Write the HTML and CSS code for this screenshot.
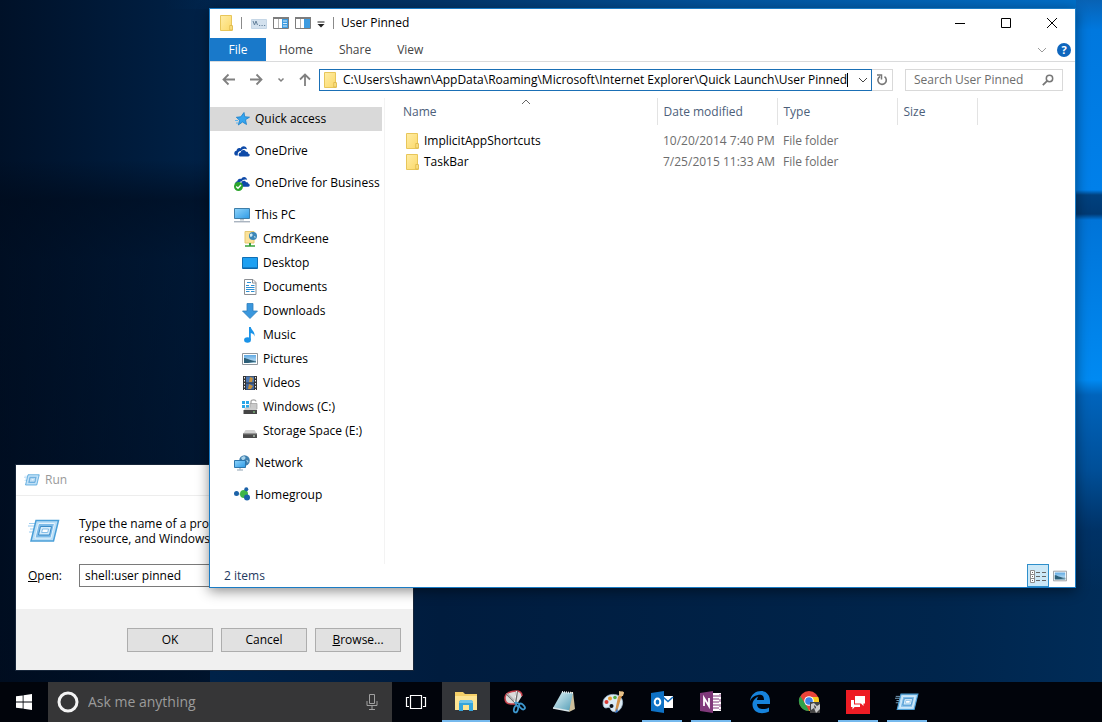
FILE: index.html
```html
<!DOCTYPE html>
<html lang="en">

<head>
    <meta charset="UTF-8">
    <meta name="viewport" content="width=device-width, initial-scale=1.0">
    <title>User Pinned</title>

    <link rel="stylesheet" href="styles.css">
</head>

<body>
    <!-- Shared icons -->
    <svg class="sprite" aria-hidden="true">
        <defs>
            <linearGradient id="g-folder" x1="0" y1="0" x2="1" y2="1">
                <stop offset="0" stop-color="#ffeda6"/>
                <stop offset="1" stop-color="#fbd867"/>
            </linearGradient>
            <linearGradient id="g-screen" x1="0" y1="0" x2="1" y2="1">
                <stop offset="0" stop-color="#8fd4fb"/>
                <stop offset="1" stop-color="#2f9be6"/>
            </linearGradient>
            <linearGradient id="g-sky" x1="0" y1="0" x2="0" y2="1">
                <stop offset="0" stop-color="#5fa9e3"/>
                <stop offset="1" stop-color="#d4ecfa"/>
            </linearGradient>
            <linearGradient id="g-note" x1="0" y1="0" x2="1" y2="1">
                <stop offset="0" stop-color="#e4f5f8"/>
                <stop offset="1" stop-color="#4f9bb5"/>
            </linearGradient>
            <symbol id="folder" viewBox="0 0 16 16">
                <path d="M2.500 .5h11v10.500h.8v4.500H2.500z" fill="url(#g-folder)" stroke="#e8c65a"/>
                <path d="M11.800 15V10.500h2.500V15z" fill="#fde48a" stroke="#dcb443" stroke-width=".8"/>
            </symbol>
            <symbol id="run" viewBox="0 0 32 24">
                <path d="M1 4.500h8M0 7h7M2 10h6M1 13h5" stroke="#9ccdf0" stroke-width="1"/>
                <path d="M8 1.500h22.500L25.500 22H3z" fill="#b9def7" stroke="#4a9fd8" stroke-width="1.500"/>
                <path d="M10.500 4.500h16L23 19H7z" fill="#7dbbe8" stroke="#e6f4fd" stroke-width="1"/>
                <path d="M12.500 7.500h11l-2 8.500h-11z" fill="#d5ecfb" stroke="#3b8cc8" stroke-width="1"/>
                <path d="M14.500 10h6l-.8 3.500h-6z" fill="#fff" stroke="#6cb0e2" stroke-width=".8"/>
            </symbol>
            <symbol id="cloud" viewBox="0 0 16 16">
                <path d="M1.500 12.500C-.5 11.500 0 8 2.500 7.800 2.600 5.300 5 4.300 6.600 5.400 8 2.200 12.300 2.500 13 6.300c-2.800-1.300-5.200 0-5.900 1.700C4.500 7.800 3.300 10 3.900 12.500z" fill="#0e4aa8"/>
                <path d="M6 13.500c-2-.3-1.800-4 .7-4C7.300 6.500 11 6.300 12 8.800c1.500-.3 2.300.5 2.200 1.700 2 0 2 3 0 3z" fill="#0e4aa8"/>
            </symbol>
            <symbol id="picture" viewBox="0 0 16 12">
                <path d="M.5.5h15v11H.5z" fill="#fff" stroke="#8f959b"/>
                <path d="M2 2h12v8H2z" fill="url(#g-sky)"/>
                <path d="M2 5c3 0 5 2.500 12 3v2H2z" fill="#2d5f78"/>
                <path d="M6 10l8-1.500V10z" fill="#9dc4d6"/>
            </symbol>
        </defs>
    </svg>

    <main class="desktop">
        <!-- Run dialog -->
        <section class="run" aria-label="Run">
            <header class="run-title">
                <svg class="run-small"><use href="#run"/></svg>
                <span>Run</span>
            </header>
            <div class="run-body">
                <div class="run-row">
                    <svg class="run-big"><use href="#run"/></svg>
                    <p class="run-text">Type the name of a program, folder, document, or Internet<br>resource, and Windows will open it for you.</p>
                </div>
                <div class="run-row">
                    <label class="run-label" for="open"><u>O</u>pen:</label>
                    <input class="run-input" id="open" type="text" value="shell:user pinned">
                </div>
            </div>
            <footer class="run-footer">
                <button class="run-button">OK</button>
                <button class="run-button">Cancel</button>
                <button class="run-button"><u>B</u>rowse...</button>
            </footer>
        </section>

        <!-- File Explorer -->
        <section class="explorer" aria-label="User Pinned">
            <header class="titlebar">
                <svg class="icon16"><use href="#folder"/></svg>
                <span class="divider"></span>
                <div class="quick">
                    <button class="plain" aria-label="Rename">
                        <svg class="icon16" viewBox="0 0 16 16">
                            <path d="M.5 4.500h15v9H.5z" fill="#d3e1ee" stroke="#c5d6e6"/>
                            <path d="M2 6l1.500 4L5 6l1.500 4" fill="none" stroke="#66829c"/>
                            <path d="M8 10.500h1.200M10.500 10.500h1.200M13 10.500h1.200" stroke="#66829c"/>
                        </svg>
                    </button>
                    <button class="plain" aria-label="Details pane">
                        <svg class="icon16" viewBox="0 0 16 16">
                            <path d="M.5 2.500h15v11H.5z" fill="#fff" stroke="#7d7d7d"/>
                            <path d="M0 3h16" stroke="#7d7d7d" stroke-width="2"/>
                            <path d="M5.500 4v9" stroke="#b5b5b5"/>
                            <path d="M9 4h6v9H9z" fill="#3d9be0"/>
                            <path d="M10 6h4M10 8.500h4M10 11h4" stroke="#d7edfb"/>
                        </svg>
                    </button>
                    <button class="plain" aria-label="Preview pane">
                        <svg class="icon16" viewBox="0 0 16 16">
                            <path d="M.5 2.500h15v11H.5z" fill="#fff" stroke="#7d7d7d"/>
                            <path d="M0 3h16" stroke="#7d7d7d" stroke-width="2"/>
                            <path d="M5.500 4v9" stroke="#b5b5b5"/>
                            <path d="M9 4h6v9H9z" fill="#3d9be0"/>
                        </svg>
                    </button>
                    <button class="plain" aria-label="Customize toolbar">
                        <svg class="icon8" viewBox="0 0 8 16">
                            <path d="M.5 7h7" stroke="#222"/>
                            <path d="M.5 9h7L4 12.500z" fill="#222"/>
                        </svg>
                    </button>
                </div>
                <span class="divider"></span>
                <h1 class="title">User Pinned</h1>
                <div class="controls">
                    <button class="control" aria-label="Minimize">
                        <svg class="icon10" viewBox="0 0 10 10"><path d="M0 5.500h10" stroke="#000"/></svg>
                    </button>
                    <button class="control" aria-label="Maximize">
                        <svg class="icon10" viewBox="0 0 10 10"><path d="M.5.5h9v9h-9z" fill="none" stroke="#000"/></svg>
                    </button>
                    <button class="control" aria-label="Close">
                        <svg class="icon10" viewBox="0 0 10 10"><path d="M0 0l10 10M10 0L0 10" stroke="#000"/></svg>
                    </button>
                </div>
            </header>

            <nav class="tabs">
                <button class="tab tab-file">File</button>
                <button class="tab">Home</button>
                <button class="tab">Share</button>
                <button class="tab">View</button>
                <div class="tabs-end">
                    <button class="plain" aria-label="Expand the ribbon">
                        <svg class="icon10" viewBox="0 0 10 10"><path d="M1 3l4 4 4-4" fill="none" stroke="#9a9a9a"/></svg>
                    </button>
                    <button class="help" aria-label="Help">?</button>
                </div>
            </nav>

            <div class="toolbar">
                <div class="arrows">
                    <button class="plain" aria-label="Back">
                        <svg class="icon14" viewBox="0 0 14 14"><path d="M13 6.500H1.500M6.500 1.500l-5 5 5 5" fill="none" stroke="#808080" stroke-width="1.800"/></svg>
                    </button>
                    <button class="plain" aria-label="Forward">
                        <svg class="icon14" viewBox="0 0 14 14"><path d="M1 6.500h11.500M7.500 1.500l5 5-5 5" fill="none" stroke="#808080" stroke-width="1.800"/></svg>
                    </button>
                    <button class="plain" aria-label="Recent locations">
                        <svg class="icon8" viewBox="0 0 8 8"><path d="M1.500 2.500L4 5l2.500-2.500" fill="none" stroke="#808080" stroke-width="1.500"/></svg>
                    </button>
                    <button class="plain" aria-label="Up">
                        <svg class="icon14" viewBox="0 0 14 14"><path d="M7 13V1.500M2 6.500l5-5 5 5" fill="none" stroke="#808080" stroke-width="1.800"/></svg>
                    </button>
                </div>
                <div class="address">
                    <svg class="icon16"><use href="#folder"/></svg>
                    <input class="address-input" type="text" aria-label="Address" value="C:\Users\shawn\AppData\Roaming\Microsoft\Internet Explorer\Quick Launch\User Pinned">
                    <span class="caret"></span>
                    <button class="plain address-drop" aria-label="Previous locations">
                        <svg class="icon10" viewBox="0 0 10 10"><path d="M1 3l4 4 4-4" fill="none" stroke="#444"/></svg>
                    </button>
                </div>
                <button class="refresh" aria-label="Refresh">
                    <svg class="icon12" viewBox="0 0 12 12">
                        <path d="M4 2.500A4.200 4.200 0 1 0 8.500 2.700" fill="none" stroke="#777" stroke-width="1.600"/>
                        <path d="M1 1h4.500v4.500" fill="none" stroke="#777" stroke-width="1.500"/>
                    </svg>
                </button>
                <div class="search">
                    <input class="search-input" type="text" aria-label="Search" placeholder="Search User Pinned">
                    <svg class="icon12" viewBox="0 0 12 12">
                        <circle cx="7.500" cy="4.500" r="3.200" fill="none" stroke="#777" stroke-width="1.500"/>
                        <path d="M5.200 6.800L.8 11.200" stroke="#777" stroke-width="1.800"/>
                    </svg>
                </div>
            </div>

            <div class="content">
                <nav class="sidebar">
                    <ul class="group">
                        <li><a class="item active" href="#">
                            <svg class="icon16" viewBox="0 0 16 16"><path d="M10 1.500l.7 4.200 4.800.5-4 2.500 1 4.800-4-2.500L4.300 14l1.300-4.700L2.300 6.300l4.500-.5z" fill="#35a4ee" stroke="#1b7fc9" stroke-width=".8"/><path d="M1 9.500h3M2 12h2" stroke="#5cb4ee"/></svg>
                            Quick access</a></li>
                    </ul>
                    <ul class="group">
                        <li><a class="item" href="#"><svg class="icon16"><use href="#cloud"/></svg>OneDrive</a></li>
                    </ul>
                    <ul class="group">
                        <li><a class="item" href="#">
                            <svg class="icon16" viewBox="0 0 16 16"><use href="#cloud" x="1" y="-1" width="15" height="15"/><circle cx="4.500" cy="11.500" r="4.500" fill="#2da52d"/><path d="M2.200 11.500l1.800 1.800 3-3.300" fill="none" stroke="#fff" stroke-width="1.300"/></svg>
                            OneDrive for Business</a></li>
                    </ul>
                    <ul class="group">
                        <li><a class="item" href="#">
                            <svg class="icon16" viewBox="0 0 16 16"><path d="M.5 1.500h15v10H.5z" fill="url(#g-screen)" stroke="#3f7ea8"/><path d="M6 12h4v1.500H6z" fill="#b8c4cc"/><path d="M0 14.800h16" stroke="#8795a5"/></svg>
                            This PC</a></li>
                        <li><a class="item child" href="#">
                            <svg class="icon16" viewBox="0 0 16 16"><path d="M3 .5h9V12H3z" fill="#fbe29a" stroke="#e5c870"/><circle cx="11" cy="5" r="4" fill="#3c87b8"/><path d="M8 3c2-1.500 3 0 2.500 1.500S8.500 6 8 5.500zM12 5c1.500 0 2 1 1 2.500z" fill="#cfe9f5"/><path d="M7 12h2v3H7z" fill="#39a23a"/><path d="M3 15h10" stroke="#39a23a" stroke-width="1.500"/></svg>
                            CmdrKeene</a></li>
                        <li><a class="item child" href="#">
                            <svg class="icon16" viewBox="0 0 16 16"><path d="M.5 2.500h15v11H.5z" fill="#1da0f2" stroke="#0f6fb5"/><path d="M1 13h14" stroke="#0c5d9c"/></svg>
                            Desktop</a></li>
                        <li><a class="item child" href="#">
                            <svg class="icon16" viewBox="0 0 16 16"><path d="M2.500.5h8.500l3 3v12H2.500z" fill="#fff" stroke="#8b8f94"/><path d="M10.500.5v3.500H14" fill="none" stroke="#8b8f94"/><path d="M5 3.500h4M4 6.500h3M9 6.500h3.500M4 8.500h8.500M4 10.500h8.500M4 12.500h3.500M9 12.500h3.500" stroke="#2d8fd2" stroke-width="1.200"/></svg>
                            Documents</a></li>
                        <li><a class="item child" href="#">
                            <svg class="icon16" viewBox="0 0 16 16"><path d="M5 .5h6V8h4.500L8 15.500.5 8H5z" fill="#3a97dd" stroke="#2f7fbd" stroke-width=".8"/></svg>
                            Downloads</a></li>
                        <li><a class="item child" href="#">
                            <svg class="icon16" viewBox="0 0 16 16"><ellipse cx="5.500" cy="13" rx="3.400" ry="2.700" fill="#1a93e8"/><path d="M7 0h1.800c.2 3 4.500 4.500 3.700 9.500-.5-2.200-1.800-3-3.700-3.500V13H7z" fill="#1a93e8"/></svg>
                            Music</a></li>
                        <li><a class="item child" href="#"><svg class="icon16"><use href="#picture"/></svg>Pictures</a></li>
                        <li><a class="item child" href="#">
                            <svg class="icon16" viewBox="0 0 16 16"><path d="M1 1h14v14H1z" fill="#333"/><path d="M4 1.500h8v6H4z" fill="#4d78b4"/><path d="M4 8.500h8v6H4z" fill="#3f66a0"/><path d="M8 2l3 1-1 4H7zM7 9l4 2-2 3H6z" fill="#c8923a"/><path d="M2.500 2v13M13.500 2v13" stroke="#eee" stroke-dasharray="1.500 1.500"/></svg>
                            Videos</a></li>
                        <li><a class="item child" href="#">
                            <svg class="icon16" viewBox="0 0 16 16"><path d="M0 2h3v3H0zM4 2h3v3H4zM0 6h3v3H0zM4 6h3v3H4z" fill="#2aa6e8"/><path d="M9 5V2.500C9 .3 14 .3 14 2.500" fill="none" stroke="#a5a5a5" stroke-width="1.300"/><path d="M8 4.500h7V10H8z" fill="#c9c9c9" stroke="#9c9c9c" stroke-width=".7"/><path d="M3 8.500h11l1 3H2z" fill="#ccc"/><path d="M1.500 11h13.500v4H1.500z" fill="#454545"/><path d="M11 13h2" stroke="#8fe08f"/></svg>
                            Windows (C:)</a></li>
                        <li><a class="item child" href="#">
                            <svg class="icon16" viewBox="0 0 16 16"><path d="M3.500 7h9l2.500 4H1z" fill="#d2d2d2"/><path d="M1 10.500h14V15H1z" fill="#4a4a4a"/><path d="M1 10.800h14" stroke="#9a9a9a"/><path d="M11 13h2" stroke="#d9eed9"/></svg>
                            Storage Space (E:)</a></li>
                    </ul>
                    <ul class="group">
                        <li><a class="item" href="#">
                            <svg class="icon16" viewBox="0 0 16 16"><circle cx="10.500" cy="5.500" r="5.300" fill="#3f7fae"/><path d="M7 3c2-2.500 4-2 4.500-.5S9 5 9 6zM12 5c2 0 3 1 2 3z" fill="#a9d3ea"/><path d="M.5 5.500h11v7H.5z" fill="url(#g-screen)" stroke="#2d77ad"/><path d="M6 13v1.500M3 15h6" stroke="#8fa3b3"/></svg>
                            Network</a></li>
                    </ul>
                    <ul class="group">
                        <li><a class="item" href="#">
                            <svg class="icon16" viewBox="0 0 16 16"><path d="M3 6.500l7 1.500 2-5M10 8l3 3" stroke="#9fc7a5" fill="none"/><circle cx="10" cy="7" r="4" fill="#3fb549"/><circle cx="2.500" cy="6.500" r="2.500" fill="#1c62a8"/><circle cx="12.300" cy="2.200" r="2" fill="#1c62a8"/><circle cx="13" cy="10.500" r="3" fill="#1c62a8"/></svg>
                            Homegroup</a></li>
                    </ul>
                </nav>

                <div class="files">
                    <table class="list">
                        <thead>
                            <tr>
                                <th class="col-name">Name
                                    <svg class="sort" viewBox="0 0 10 6"><path d="M1 5l4-4 4 4" fill="none" stroke="#666"/></svg>
                                </th>
                                <th class="col-date">Date modified</th>
                                <th class="col-type">Type</th>
                                <th class="col-size">Size</th>
                                <td></td>
                            </tr>
                        </thead>
                        <tbody>
                            <tr class="spacer"><td colspan="5"></td></tr>
                            <tr>
                                <td><span class="file"><svg class="icon16"><use href="#folder"/></svg>ImplicitAppShortcuts</span></td>
                                <td>10/20/2014 7:40 PM</td>
                                <td>File folder</td>
                                <td></td>
                                <td></td>
                            </tr>
                            <tr>
                                <td><span class="file"><svg class="icon16"><use href="#folder"/></svg>TaskBar</span></td>
                                <td>7/25/2015 11:33 AM</td>
                                <td>File folder</td>
                                <td></td>
                                <td></td>
                            </tr>
                        </tbody>
                    </table>
                </div>
            </div>

            <footer class="status">
                <span>2 items</span>
                <div class="views">
                    <button class="view selected" aria-label="Details">
                        <svg class="icon16" viewBox="0 0 16 14"><path d="M.5 1.500h4v12h-4zM.5 5.500h4M.5 9.500h4" fill="#fff" stroke="#8c8c8c"/><path d="M2 3.500h1M2 7.500h1M2 11.500h1M6 3.500h4M6 7.500h4M6 11.500h4M12 3.500h4M12 7.500h4M12 11.500h4" stroke="#666"/></svg>
                    </button>
                    <button class="view" aria-label="Large icons">
                        <svg class="icon14"><use href="#picture"/></svg>
                    </button>
                </div>
            </footer>
        </section>
    </main>

    <!-- Taskbar -->
    <footer class="taskbar">
        <button class="task start" aria-label="Start">
            <svg class="icon16" viewBox="0 0 16 16"><path d="M0 2.300L6.700 1.400V7.600H0zM7.500 1.200L16 0v7.600H7.500zM0 8.400h6.700v6.200L0 13.700zM7.500 8.400H16V16l-8.500-1.200z" fill="#fff"/></svg>
        </button>
        <div class="cortana">
            <svg class="icon22" viewBox="0 0 22 22"><circle cx="11" cy="11" r="9" fill="none" stroke="#f4f4f4" stroke-width="3"/></svg>
            <input class="cortana-input" type="text" aria-label="Cortana" placeholder="Ask me anything">
            <svg class="mic" viewBox="0 0 12 18"><path d="M3.500 1.500h5v9h-5zM1 8v4.500h10V8M6 12.500V16M3 16.500h6" fill="none" stroke="#a0a0a0"/></svg>
        </div>
        <button class="task" aria-label="Task view">
            <svg class="icon22" viewBox="0 0 22 22"><path d="M5.500 4.500h11v13h-11zM4 6.500H1.500v9H4M18 6.500h2.500v9H18" fill="none" stroke="#fff" stroke-width="1.200"/></svg>
        </button>
        <div class="apps">
            <button class="task current" aria-label="File Explorer">
                <svg class="icon24" viewBox="0 0 24 24"><path d="M1 3h8l2 2h12v16H1z" fill="#f4cf68"/><path d="M1 7h22v14H1z" fill="#fde493"/><path d="M5 22v-8c0-2 1-3 3-3h8c2 0 3 1 3 3v8h-4v-6H9v6z" fill="#35a5dc"/><path d="M5 14c0-2 1-3 3-3h8c2 0 3 1 3 3z" fill="#71c5ea"/></svg>
            </button>
            <button class="task" aria-label="Snipping Tool">
                <svg class="icon24" viewBox="0 0 24 24"><path d="M2 8C2 3 8 1 13 1c4 0 6 2 6 5l-5 8H8c-4 0-6-2-6-6z" fill="#dcdcdc"/><path d="M13 14H8c-4 0-6-2-6-6C2 3 8 1 13 1c4 0 6 2 6 5" fill="none" stroke="#c9434e" stroke-width="1.500"/><path d="M4 4l10 10M14 1l-2 13" stroke="#6d6d6d" stroke-width="2.200"/><path d="M4 3.500l9 9M13.500 1l-2 11" stroke="#f5f5f5"/><ellipse cx="13" cy="19" rx="2" ry="3.500" fill="none" stroke="#3d98cf" stroke-width="1.800" transform="rotate(15 13 19)"/><ellipse cx="19" cy="16.500" rx="2" ry="3.500" fill="none" stroke="#3d98cf" stroke-width="1.800" transform="rotate(-45 19 16.500)"/><path d="M12 12l2 4M12 12l5 2" stroke="#3d98cf" stroke-width="1.500"/></svg>
            </button>
            <button class="task" aria-label="Notepad">
                <svg class="icon24" viewBox="0 0 24 24"><path d="M18 2h3l2 17-6 3z" fill="#cdbf9c"/><path d="M10 2l11 1-4 18L1 18z" fill="url(#g-note)"/><path d="M1 18l16 3" stroke="#d9e6ea" stroke-width="1.300"/><path d="M10 2l11 1" stroke="#e6ecee" stroke-width="2" stroke-dasharray="1 1"/></svg>
            </button>
            <button class="task" aria-label="Paint">
                <svg class="icon24" viewBox="0 0 24 24"><path d="M2 13C2 6 10 3 16 5c6 2 7 8 4 13-2 4-8 5-10 2-1-3-2-3-5-2-2 0-3-2-3-5z" fill="#dcebf5" stroke="#9fb9cb" stroke-width=".8"/><circle cx="5.500" cy="12" r="2" fill="#d83a35"/><circle cx="9" cy="8.500" r="2" fill="#e99a2c"/><circle cx="14" cy="7.500" r="1.800" fill="#55ad47"/><circle cx="10.500" cy="16" r="2" fill="#0a1018"/><path d="M21 1l2 2-3 5-4 14-2-1 3-14z" fill="#d4924a"/><path d="M18 1l5 1-1 4-4 0z" fill="#e6c189"/><path d="M16 18l1 4-3 1z" fill="#3976c8"/></svg>
            </button>
            <button class="task running" aria-label="Outlook">
                <svg class="icon24" viewBox="0 0 24 24"><path d="M13 6h10v12H13z" fill="#fff"/><path d="M13 7l5 4.500L23 7" fill="none" stroke="#0f6cbf" stroke-width="1.600"/><path d="M1 3l13-2v22L1 21z" fill="#0e72c6"/><ellipse cx="7.500" cy="12" rx="2.800" ry="3.500" fill="none" stroke="#fff" stroke-width="2"/></svg>
            </button>
            <button class="task running" aria-label="OneNote">
                <svg class="icon24" viewBox="0 0 24 24"><path d="M13 3h9v18h-9z" fill="#fff"/><path d="M14 6h6M14 9h6M14 12h6M14 15h6M14 18h6" stroke="#80397b"/><path d="M21 4v16" stroke="#80397b" stroke-dasharray="3 2"/><path d="M1 3l13-2v22L1 21z" fill="#80397b"/><path d="M5 16V8l5 8V8" fill="none" stroke="#fff" stroke-width="1.800"/></svg>
            </button>
            <button class="task" aria-label="Edge">
                <svg class="icon24" viewBox="0 0 24 24"><path d="M2 11C3 4 8 1 13 1c6 0 9 5 9 10v3H9c0 6 8 6 12 3.500v4C14 25 5 23 4.500 15 4.300 11 7 8 10.500 6.500 9.500 7.500 9 9 9 10h7c0-5-3-5.500-6-5C6 5.500 3.500 8 2 11z" fill="#1683dc"/></svg>
            </button>
            <button class="task" aria-label="Chrome">
                <svg class="icon24" viewBox="0 0 24 24"><circle cx="12" cy="11" r="10" fill="#e9443a"/><path d="M3.300 6L9 15l3 6A10 10 0 0 1 3.300 6z" fill="#30a24c"/><path d="M12 7h9.200A10 10 0 0 1 12 21l5-8z" fill="#fbcd1d"/><circle cx="12" cy="11" r="4.800" fill="#fff"/><circle cx="12" cy="11" r="3.800" fill="#3f83ea"/><path d="M13 12h10v11H13z" fill="#444"/><path d="M14 14l3-1 3 3 3-2v5l-4 4-2-5-3 2z" fill="#c9c9c9"/><path d="M17 15l2 2-1 2z" fill="#222"/></svg>
            </button>
            <button class="task running" aria-label="Chat">
                <svg class="icon24" viewBox="0 0 24 24"><path d="M0 0h24v24H0z" fill="#ed1c24"/><path d="M9 6h10v7.500h-1.500V16L15 13.500H9z" fill="#fff"/><path d="M5 10h3v4.500h6V17H8.500L6.500 19.500V17H5z" fill="#fff"/></svg>
            </button>
            <button class="task running" aria-label="Run">
                <svg class="icon24"><use href="#run"/></svg>
            </button>
        </div>
    </footer>
</body>

</html>
```
FILE: styles.css
```css
* {
    box-sizing: border-box;
}

body {
    margin: 0;
    height: 100vh;
    display: flex;
    flex-direction: column;
    overflow: hidden;
    font-family: "Open Sans", "Noto Sans", sans-serif;
    font-size: 12px;
    line-height: 16px;
    color: #000;
}

button, input {
    font: inherit;
    color: inherit;
    border: none;
    padding: 0;
    margin: 0;
    background: none;
}

input {
    outline: none;
    min-width: 0;
}

svg {
    display: block;
    flex: none;
}

ul {
    list-style: none;
    margin: 0;
    padding: 0;
}

.sprite {
    position: absolute;
    width: 0;
    height: 0;
}

.icon8 { width: 8px; height: 16px; }
.icon10 { width: 10px; height: 10px; }
.icon12 { width: 12px; height: 12px; }
.icon14 { width: 14px; height: 14px; }
.icon16 { width: 16px; height: 16px; }
.icon22 { width: 22px; height: 22px; }
.icon24 { width: 24px; height: 24px; }

.plain {
    display: flex;
    align-items: center;
}

/* Desktop wallpaper */
.desktop {
    flex: 1;
    position: relative;
    background:
        linear-gradient(to bottom, #0862b4 0, #0078de 30px, #0080ea 190px, #00417f 195px, #003a74 214px, #0074d8 220px, #008af2 380px, #0064bc 395px, #004f98 470px, rgba(0, 52, 106, .8) 530px, rgba(0, 42, 86, 0) 590px) right top / 26px 100% no-repeat,
        linear-gradient(to right, rgba(0, 30, 66, 0) 15%, #003468 40%, #00539c 65%, #0070ca 100%) left top / 100% 9px no-repeat,
        linear-gradient(to bottom, rgba(0, 10, 26, 0) 160px, rgba(0, 10, 26, .6) 200px, rgba(0, 10, 26, .4) 260px, rgba(0, 10, 26, .6) 100%) left top / 210px 100% no-repeat,
        linear-gradient(to right, #001128 0, #002248 210px, #001c3e 40%, #00254c 85%, #002c58 100%);
}

/* Run dialog */
.run {
    position: absolute;
    left: 15px;
    bottom: 11px;
    width: 399px;
    background: #fff;
    border: 1px solid #17263a;
}

.run-title {
    display: flex;
    align-items: center;
    gap: 5px;
    height: 31px;
    padding: 0 8px;
    color: #999;
    border-bottom: 1px solid #ededed;
}

.run-small {
    width: 16px;
    height: 12px;
}

.run-big {
    width: 32px;
    height: 24px;
}

.run-body {
    display: grid;
    gap: 18px;
    padding: 20px 12px 22px;
}

.run-row {
    display: grid;
    grid-template-columns: 51px 1fr;
    align-items: center;
}

.run-text {
    margin: 0;
    line-height: 15px;
    white-space: nowrap;
}

.run-input {
    height: 23px;
    padding: 0 5px;
    border: 1px solid #7a7a7a;
}

.run-footer {
    display: flex;
    justify-content: flex-end;
    gap: 8px;
    padding: 19px 12px 18px;
    background: #f0f0f0;
}

.run-button {
    width: 86px;
    height: 24px;
    background: #e1e1e1;
    border: 1px solid #adadad;
}

/* Explorer window */
.explorer {
    position: absolute;
    top: 8px;
    left: 209px;
    right: 26px;
    bottom: 94px;
    display: flex;
    flex-direction: column;
    background: #fff;
    border: 1px solid #1a7bc4;
    box-shadow: 0 3px 12px rgba(0, 0, 0, .45);
}

.titlebar {
    display: flex;
    align-items: center;
    gap: 7px;
    height: 29px;
    padding: 0 0 2px 8px;
}

.divider {
    width: 1px;
    height: 12px;
    background: #8a8a8a;
}

.quick {
    display: flex;
    gap: 6px;
    padding: 0 1px 0 2px;
}

.title {
    margin: 0;
    font-size: 12px;
    font-weight: normal;
}

.controls {
    display: flex;
    margin-left: auto;
}

.control {
    display: flex;
    align-items: center;
    justify-content: center;
    width: 46px;
    height: 26px;
}

.tabs {
    display: flex;
    height: 24px;
    border-bottom: 1px solid #dadbdc;
}

.tab {
    padding: 0 13px;
    color: #444;
}

.tab-file {
    width: 56px;
    color: #fff;
    background: #1979ca;
}

.tabs-end {
    display: flex;
    align-items: center;
    gap: 10px;
    margin-left: auto;
    padding-right: 4px;
}

.help {
    width: 14px;
    height: 14px;
    border-radius: 50%;
    background: #0f66bd;
    color: #fff;
    font-size: 11px;
    font-weight: bold;
    line-height: 14px;
}

.toolbar {
    display: flex;
    align-items: center;
    height: 36px;
    padding: 0 12px;
}

.arrows {
    display: flex;
    align-items: center;
    justify-content: space-between;
    width: 90px;
    margin-right: 7px;
}

.address {
    flex: 1;
    display: flex;
    align-items: center;
    height: 22px;
    padding: 0 3px 0 2px;
    border: 1px solid #1a6fb5;
}

.address-input {
    field-sizing: content;
    padding-left: 5px;
}

.caret {
    width: 1px;
    height: 14px;
    background: #000;
}

.address-drop {
    margin-left: auto;
}

.refresh {
    display: flex;
    align-items: center;
    justify-content: center;
    width: 21px;
    height: 22px;
    border: 1px solid #d9d9d9;
    border-left: none;
}

.search {
    display: flex;
    align-items: center;
    width: 158px;
    height: 22px;
    margin-left: 12px;
    padding: 0 8px;
    border: 1px solid #d9d9d9;
}

.search-input {
    flex: 1;
}

.search-input::placeholder {
    color: #6d6d6d;
}

.content {
    flex: 1;
    display: flex;
    min-height: 0;
}

/* Navigation pane */
.sidebar {
    display: flex;
    flex-direction: column;
    gap: 8px;
    width: 175px;
    padding: 9px 2px 0 0;
    border-right: 1px solid #f3f3f3;
}

.item {
    display: flex;
    align-items: center;
    gap: 5px;
    height: 24px;
    padding-left: 24px;
    color: #000;
    text-decoration: none;
    white-space: nowrap;
}

.child {
    padding-left: 32px;
}

.active {
    background: #d9d9d9;
}

/* File list */
.files {
    flex: 1;
}

.list {
    width: 100%;
    table-layout: fixed;
    border-collapse: collapse;
}

.list th {
    height: 27px;
    padding: 0 6px;
    font-weight: normal;
    text-align: left;
    color: #4c607a;
    border-right: 1px solid #e3e3e3;
}

.list td {
    height: 21px;
    padding: 0 6px;
    color: #6d6d6d;
    white-space: nowrap;
}

.list .col-name {
    position: relative;
    width: 272px;
    padding-left: 18px;
}

.col-date, .col-type {
    width: 120px;
}

.col-size {
    width: 80px;
}

.list .spacer td {
    height: 5px;
}

.sort {
    position: absolute;
    top: 1px;
    left: 50%;
    width: 10px;
    height: 6px;
}

.file {
    display: flex;
    align-items: center;
    gap: 4px;
    padding-left: 13px;
    color: #000;
}

/* Status bar */
.status {
    display: flex;
    align-items: center;
    justify-content: space-between;
    height: 23px;
    padding: 0 4px 0 14px;
    color: #1e3a5f;
}

.views {
    display: flex;
}

.view {
    display: flex;
    align-items: center;
    justify-content: center;
    width: 22px;
    height: 23px;
}

.selected {
    background: #cce8f7;
    border: 1px solid #2f8fcb;
}

/* Taskbar */
.taskbar {
    display: flex;
    height: 40px;
    background: #01040b;
}

.task {
    position: relative;
    display: flex;
    align-items: center;
    justify-content: center;
    width: 48px;
    height: 40px;
}

.cortana {
    display: flex;
    align-items: center;
    gap: 9px;
    width: 344px;
    padding: 0 14px 0 9px;
    background: #363637;
}

.cortana-input {
    flex: 1;
    font-size: 14px;
    line-height: 20px;
}

.cortana-input::placeholder {
    color: #9b9b9b;
}

.mic {
    width: 12px;
    height: 18px;
}

.apps {
    display: flex;
    gap: 1px;
    padding-left: 2px;
}

.current {
    background: #333539;
    border-bottom: 2px solid #76b9ed;
}

/* Line under the apps that are open */
.running::after {
    content: "";
    position: absolute;
    left: 4px;
    right: 4px;
    bottom: 0;
    height: 2px;
    background: #76b9ed;
}
```
